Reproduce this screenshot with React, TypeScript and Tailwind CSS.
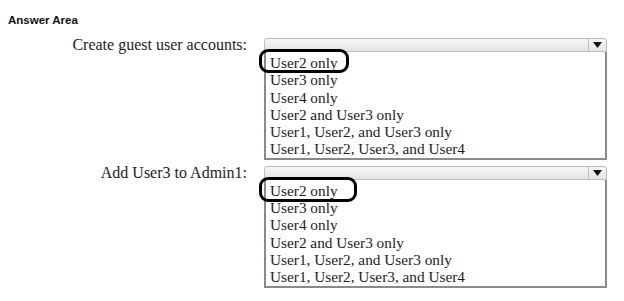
const options = [
    'User2 only',
    'User3 only',
    'User4 only',
    'User2 and User3 only',
    'User1, User2, and User3 only',
    'User1, User2, User3, and User4',
];

type Question = { label: string; ovalWidth: string; ovalHeight: string };

const questions: Question[] = [
    { label: 'Create guest user accounts:', ovalWidth: 'w-[90px]', ovalHeight: 'h-[24px]' },
    { label: 'Add User3 to Admin1:', ovalWidth: 'w-[98px]', ovalHeight: 'h-[25px]' },
];

const Dropdown = ({ ovalWidth, ovalHeight }: { ovalWidth: string; ovalHeight: string }) => (
    <div className="w-[343px]">
        {/* closed select bar */}
        <div className="flex h-[14px] rounded-t-[3px] border border-[#bcbcbc] bg-gradient-to-b from-[#f6f6f6] to-[#e4e4e4]">
            <div className="flex-1" />
            <div className="flex w-[18px] items-center justify-center border-l border-[#bcbcbc]">
                <svg width="9" height="6" viewBox="0 0 9 6">
                    <path d="M0 0 H9 L4.5 6 Z" fill="#111" />
                </svg>
            </div>
        </div>
        {/* open list */}
        <div className="relative border-x-2 border-b-2 border-[#8a8a8a] pl-[4px] pt-[2px]">
            {options.map((opt) => (
                <div key={opt} className="h-[17.3px] text-[15.3px] leading-[17px] text-[#1c1c1c]">
                    {opt}
                </div>
            ))}
            <div
                className={`absolute left-[-7px] top-[-3px] ${ovalWidth} ${ovalHeight} rounded-[9px] border-[3px] border-black`}
            />
        </div>
    </div>
);

export default function App() {
    return (
        <div className="h-[301px] w-[624px] bg-white font-['Liberation_Serif',serif]">
            <div className="pl-[8px] pt-[13px] font-['Liberation_Sans',sans-serif] text-[11.5px] leading-[14px] font-bold text-[#111]">
                Answer Area
            </div>
            <div className="mt-[11px] flex flex-col gap-[6px]">
                {questions.map((q) => (
                    <div key={q.label} className="flex">
                        <div className="w-[248px] pr-[1px] text-right text-[16px] leading-[14px] text-[#1c1c1c]">
                            {q.label}
                        </div>
                        <div className="ml-[16px]">
                            <Dropdown ovalWidth={q.ovalWidth} ovalHeight={q.ovalHeight} />
                        </div>
                    </div>
                ))}
            </div>
        </div>
    );
}
